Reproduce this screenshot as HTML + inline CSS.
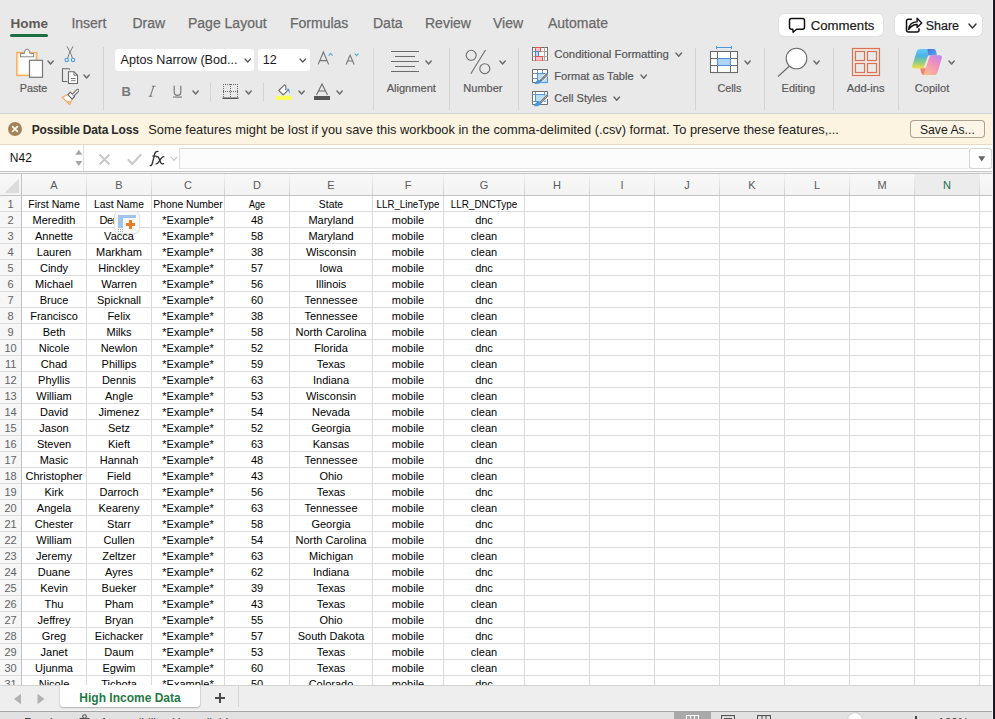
<!DOCTYPE html>
<html><head><meta charset="utf-8"><style>
html,body{margin:0;padding:0;}
body{width:995px;height:719px;overflow:hidden;position:relative;background:#e9e9e9;font-family:"Liberation Sans",sans-serif;}
.t{position:absolute;white-space:nowrap;}
.r{position:absolute;}
</style></head><body>
<div class="r" style="left:0px;top:0px;width:995px;height:113px;background:#e9e9e9;"></div>
<div class="t" style="left:10.50px;top:16.67px;font-size:13.5px;line-height:13.5px;color:#5a5a5a;font-weight:bold;">Home</div>
<div class="r" style="left:10px;top:34px;width:38px;height:3px;background:#1d7044;border-radius:2px;"></div>
<div class="t" style="left:71.40px;top:16.25px;font-size:14px;line-height:14px;color:#6a6a6a;-webkit-text-stroke:0.25px #6a6a6a;">Insert</div>
<div class="t" style="left:132.50px;top:16.25px;font-size:14px;line-height:14px;color:#6a6a6a;-webkit-text-stroke:0.25px #6a6a6a;">Draw</div>
<div class="t" style="left:188.00px;top:16.25px;font-size:14px;line-height:14px;color:#6a6a6a;-webkit-text-stroke:0.25px #6a6a6a;">Page Layout</div>
<div class="t" style="left:290.00px;top:16.25px;font-size:14px;line-height:14px;color:#6a6a6a;-webkit-text-stroke:0.25px #6a6a6a;">Formulas</div>
<div class="t" style="left:373.00px;top:16.25px;font-size:14px;line-height:14px;color:#6a6a6a;-webkit-text-stroke:0.25px #6a6a6a;">Data</div>
<div class="t" style="left:425.00px;top:16.25px;font-size:14px;line-height:14px;color:#6a6a6a;-webkit-text-stroke:0.25px #6a6a6a;">Review</div>
<div class="t" style="left:493.00px;top:16.25px;font-size:14px;line-height:14px;color:#6a6a6a;-webkit-text-stroke:0.25px #6a6a6a;">View</div>
<div class="t" style="left:548.00px;top:16.25px;font-size:14px;line-height:14px;color:#6a6a6a;-webkit-text-stroke:0.25px #6a6a6a;">Automate</div>
<div class="r" style="left:779px;top:14px;width:104px;height:22px;background:#fff;border-radius:5px;box-shadow:0 0 0 0.5px #d6d6d6;"></div>
<svg class="r" style="left:788px;top:17px" width="19" height="17" viewBox="0 0 19 17"><path d="M3.5 1.5 H14.5 Q16.5 1.5 16.5 3.5 V10.2 Q16.5 12.2 14.5 12.2 H8.6 L5.1 15.2 L4.8 12.2 H3.5 Q1.5 12.2 1.5 10.2 V3.5 Q1.5 1.5 3.5 1.5Z" fill="none" stroke="#111" stroke-width="1.5" stroke-linejoin="round"/></svg>
<div class="t" style="left:810.70px;top:19.13px;font-size:13.2px;line-height:13.2px;color:#1a1a1a;-webkit-text-stroke:0.2px #1a1a1a;">Comments</div>
<div class="r" style="left:895px;top:14px;width:87px;height:22px;background:#fff;border-radius:5px;box-shadow:0 0 0 0.5px #d6d6d6;"></div>
<svg class="r" style="left:904px;top:15px" width="19" height="18" viewBox="0 0 19 18"><path d="M7.5 4.2 h-3 a2 2 0 0 0 -2 2 v8.8 a2 2 0 0 0 2 2 h8.5 a2 2 0 0 0 2 -2 v-1.2" fill="none" stroke="#111" stroke-width="1.5" stroke-linecap="round"/><path d="M4.5 14.5 c0.6 -4.5 3.8 -7.6 8.6 -7.6 v-3.6 l4.6 4.6 l-4.6 4.6 v-3 c-3.4 0 -6.4 1.8 -8.6 5z" fill="none" stroke="#111" stroke-width="1.4" stroke-linejoin="round"/></svg>
<div class="t" style="left:925.70px;top:19.72px;font-size:12.5px;line-height:12.5px;color:#1a1a1a;-webkit-text-stroke:0.2px #1a1a1a;">Share</div>
<svg class="r" style="left:967.8px;top:22.6px" width="9" height="6" viewBox="0 0 9 6"><path d="M1 1 L4.5 5 L8 1" fill="none" stroke="#333" stroke-width="1.4" stroke-linecap="round" stroke-linejoin="round"/></svg>
<div class="r" style="left:103px;top:47px;width:1px;height:63px;background:#d3d3d3;"></div>
<div class="r" style="left:373px;top:48px;width:1px;height:62px;background:#d3d3d3;"></div>
<div class="r" style="left:449px;top:48px;width:1px;height:62px;background:#d3d3d3;"></div>
<div class="r" style="left:518px;top:48px;width:1px;height:62px;background:#d3d3d3;"></div>
<div class="r" style="left:695px;top:48px;width:1px;height:62px;background:#d3d3d3;"></div>
<div class="r" style="left:764px;top:48px;width:1px;height:62px;background:#d3d3d3;"></div>
<div class="r" style="left:833px;top:48px;width:1px;height:62px;background:#d3d3d3;"></div>
<div class="r" style="left:898px;top:48px;width:1px;height:62px;background:#d3d3d3;"></div>
<div class="r" style="left:210px;top:83px;width:1px;height:18px;background:#d3d3d3;"></div>
<div class="r" style="left:263px;top:83px;width:1px;height:18px;background:#d3d3d3;"></div>
<svg class="r" style="left:14px;top:46px" width="32" height="34" viewBox="0 0 32 34"><rect x="2.8" y="6.5" width="20" height="23" fill="#fbe9bd" stroke="#f5ac5f" stroke-width="1.3"/><rect x="4.6" y="8.3" width="16.4" height="19.4" fill="#fdfdfd"/><path d="M6.6 10.7 v-3.2 h3.6 q0.6 -4.2 2.9 -4.2 q2.3 0 2.9 4.2 h3.6 v3.2z" fill="#fff" stroke="#8a8a8a" stroke-width="1.1"/><rect x="15.5" y="14.3" width="13" height="17" fill="#fdfdfd" stroke="#777" stroke-width="1.2"/></svg>
<svg class="r" style="left:47.199999999999996px;top:59.8px" width="7.2" height="5" viewBox="0 0 7.2 5"><path d="M1 1 L3.6 4 L6.2 1" fill="none" stroke="#6b6b6b" stroke-width="1.5" stroke-linecap="round" stroke-linejoin="round"/></svg>
<div class="t" style="left:19.70px;top:82.76px;font-size:10.8px;line-height:10.8px;color:#5a5a5a;-webkit-text-stroke:0.2px #5a5a5a;">Paste</div>
<svg class="r" style="left:63px;top:45px" width="14" height="18" viewBox="0 0 14 18"><path d="M4 1.3 L8.2 9.5 M10 1.3 L5.8 9.5" stroke="#7a7a7a" stroke-width="1" fill="none"/><path d="M8.2 9.5 L9.3 13 M5.8 9.5 L4.7 13" stroke="#7a7a7a" stroke-width="1" fill="none"/><circle cx="3.7" cy="15" r="1.7" fill="none" stroke="#4c9be0" stroke-width="1.1"/><circle cx="10" cy="15" r="1.7" fill="none" stroke="#4c9be0" stroke-width="1.1"/></svg>
<svg class="r" style="left:61px;top:67px" width="18" height="18" viewBox="0 0 18 18"><path d="M6.5 14.5 h-5 v-12.8 h6.5 l1 1" fill="none" stroke="#6b6b6b" stroke-width="1.1"/><path d="M7.5 4.7 h5.5 l3.5 3.5 v8.3 h-9z" fill="#fff" stroke="#6b6b6b" stroke-width="1.1"/><path d="M13 4.7 v3.5 h3.5" fill="none" stroke="#6b6b6b" stroke-width="1"/><rect x="10" y="11" width="4.5" height="1" fill="#7a7a7a"/><rect x="10" y="13.2" width="4.5" height="1" fill="#7a7a7a"/></svg>
<svg class="r" style="left:83.4px;top:73.7px" width="7.2" height="5" viewBox="0 0 7.2 5"><path d="M1 1 L3.6 4 L6.2 1" fill="none" stroke="#6b6b6b" stroke-width="1.5" stroke-linecap="round" stroke-linejoin="round"/></svg>
<svg class="r" style="left:61px;top:88px" width="18" height="18" viewBox="0 0 18 18"><path d="M1.2 9.3 L7.3 6.2 L11.6 10.5 L8.6 16.6z" fill="#fff" stroke="#f2a65e" stroke-width="1.1" stroke-linejoin="round"/><path d="M4.5 12.3 L8.6 16.6 L10 13.6 z" fill="#f5b57a"/><path d="M6.8 6.7 L9.3 4.2 L13.6 8.5 L11.1 11z" fill="#fff" stroke="#6b6b6b" stroke-width="1.1" stroke-linejoin="round"/><path d="M11.2 6.3 L15.8 1.7 a1.2 1.2 0 0 1 1.7 1.7 L12.9 8" fill="#fff" stroke="#6b6b6b" stroke-width="1.1"/></svg>
<div class="r" style="left:115px;top:49px;width:139px;height:22px;background:#fff;border-radius:4px;"></div>
<div class="t" style="left:120.60px;top:53.93px;font-size:12.6px;line-height:12.6px;color:#1a1a1a;">Aptos Narrow (Bod...</div>
<svg class="r" style="left:243.65px;top:58.0px" width="7.5" height="5" viewBox="0 0 7.5 5"><path d="M1 1 L3.75 4 L6.5 1" fill="none" stroke="#555" stroke-width="1.2" stroke-linecap="round" stroke-linejoin="round"/></svg>
<div class="r" style="left:258px;top:49px;width:52px;height:22px;background:#fff;border-radius:4px;"></div>
<div class="t" style="left:262.80px;top:53.53px;font-size:12.6px;line-height:12.6px;color:#1a1a1a;">12</div>
<svg class="r" style="left:299.45px;top:58.0px" width="7.5" height="5" viewBox="0 0 7.5 5"><path d="M1 1 L3.75 4 L6.5 1" fill="none" stroke="#555" stroke-width="1.2" stroke-linecap="round" stroke-linejoin="round"/></svg>
<svg class="r" style="left:315px;top:50px" width="22" height="17" viewBox="0 0 22 17"><path d="M3.2 14.4 L8.4 2 L13.6 14.4 M4.9 10.6 H11.9" fill="none" stroke="#777" stroke-width="1.15"/><path d="M13.6 5.6 L15.6 3.4 L17.6 5.6" fill="none" stroke="#5aaee8" stroke-width="1.2"/></svg>
<svg class="r" style="left:343px;top:52px" width="20" height="15" viewBox="0 0 20 15"><path d="M3.1 12.4 L7.1 3.1 L11.1 12.4 M4.5 9 H9.7" fill="none" stroke="#777" stroke-width="1.15"/><path d="M11.7 1.6 L13.6 3.6 L15.5 1.6" fill="none" stroke="#5aaee8" stroke-width="1.2"/></svg>
<div class="t" style="left:121.60px;top:85.20px;font-size:13px;line-height:13px;color:#7a7a7a;font-weight:bold;">B</div>
<svg class="r" style="left:146px;top:84px" width="12" height="14" viewBox="0 0 12 14"><path d="M5.9 2.2 h3.6 M2.6 12.2 h3.6 M7.7 2.2 L4.4 12.2" stroke="#7a7a7a" stroke-width="1.1" fill="none"/></svg>
<svg class="r" style="left:171px;top:84px" width="13" height="15" viewBox="0 0 13 15"><path d="M3.2 1.8 V8 a3.3 3.3 0 0 0 6.6 0 V1.8" fill="none" stroke="#7a7a7a" stroke-width="1.2"/><rect x="2" y="12.5" width="9" height="1.1" fill="#7a7a7a"/></svg>
<svg class="r" style="left:192.20000000000002px;top:89.7px" width="7.2" height="5" viewBox="0 0 7.2 5"><path d="M1 1 L3.6 4 L6.2 1" fill="none" stroke="#6b6b6b" stroke-width="1.5" stroke-linecap="round" stroke-linejoin="round"/></svg>
<svg class="r" style="left:221px;top:83px" width="19" height="17" viewBox="0 0 19 17"><rect x="2" y="1" width="1" height="1" fill="#6b6b6b"/><rect x="2" y="8" width="1" height="1" fill="#6b6b6b"/><rect x="4" y="1" width="1" height="1" fill="#6b6b6b"/><rect x="4" y="8" width="1" height="1" fill="#6b6b6b"/><rect x="6" y="1" width="1" height="1" fill="#6b6b6b"/><rect x="6" y="8" width="1" height="1" fill="#6b6b6b"/><rect x="8" y="1" width="1" height="1" fill="#6b6b6b"/><rect x="8" y="8" width="1" height="1" fill="#6b6b6b"/><rect x="10" y="1" width="1" height="1" fill="#6b6b6b"/><rect x="10" y="8" width="1" height="1" fill="#6b6b6b"/><rect x="12" y="1" width="1" height="1" fill="#6b6b6b"/><rect x="12" y="8" width="1" height="1" fill="#6b6b6b"/><rect x="14" y="1" width="1" height="1" fill="#6b6b6b"/><rect x="14" y="8" width="1" height="1" fill="#6b6b6b"/><rect x="16" y="1" width="1" height="1" fill="#6b6b6b"/><rect x="16" y="8" width="1" height="1" fill="#6b6b6b"/><rect x="2" y="1" width="1" height="1" fill="#6b6b6b"/><rect x="16" y="1" width="1" height="1" fill="#6b6b6b"/><rect x="9" y="1" width="1" height="1" fill="#6b6b6b"/><rect x="2" y="3" width="1" height="1" fill="#6b6b6b"/><rect x="16" y="3" width="1" height="1" fill="#6b6b6b"/><rect x="9" y="3" width="1" height="1" fill="#6b6b6b"/><rect x="2" y="5" width="1" height="1" fill="#6b6b6b"/><rect x="16" y="5" width="1" height="1" fill="#6b6b6b"/><rect x="9" y="5" width="1" height="1" fill="#6b6b6b"/><rect x="2" y="7" width="1" height="1" fill="#6b6b6b"/><rect x="16" y="7" width="1" height="1" fill="#6b6b6b"/><rect x="9" y="7" width="1" height="1" fill="#6b6b6b"/><rect x="2" y="9" width="1" height="1" fill="#6b6b6b"/><rect x="16" y="9" width="1" height="1" fill="#6b6b6b"/><rect x="9" y="9" width="1" height="1" fill="#6b6b6b"/><rect x="2" y="11" width="1" height="1" fill="#6b6b6b"/><rect x="16" y="11" width="1" height="1" fill="#6b6b6b"/><rect x="9" y="11" width="1" height="1" fill="#6b6b6b"/><rect x="2" y="13" width="1" height="1" fill="#6b6b6b"/><rect x="16" y="13" width="1" height="1" fill="#6b6b6b"/><rect x="9" y="13" width="1" height="1" fill="#6b6b6b"/><rect x="1.5" y="14.5" width="16" height="1.5" fill="#555"/></svg>
<svg class="r" style="left:245.4px;top:89.7px" width="7.2" height="5" viewBox="0 0 7.2 5"><path d="M1 1 L3.6 4 L6.2 1" fill="none" stroke="#6b6b6b" stroke-width="1.5" stroke-linecap="round" stroke-linejoin="round"/></svg>
<svg class="r" style="left:275px;top:82px" width="19" height="19" viewBox="0 0 19 19"><path d="M13 8.2 L8.2 12.8 L3.8 8.5 L9 3.3 L10.6 3.6 L10.8 7.8z" fill="#fff"/><path d="M13 8.2 L8.2 12.8 L3.8 8.5 L8.7 3.6 Q9.9 2.2 10.7 3.8 L10.8 7.8" fill="none" stroke="#6b6b6b" stroke-width="1.15" stroke-linejoin="round" stroke-linecap="round"/><path d="M12.5 6.2 Q15.2 6.6 14.6 11.8 Q13.8 9.2 12.3 8.3z" fill="#4a96dc"/><rect x="1" y="13.8" width="16" height="4.2" fill="#fcfb5c"/></svg>
<svg class="r" style="left:298.4px;top:89.7px" width="7.2" height="5" viewBox="0 0 7.2 5"><path d="M1 1 L3.6 4 L6.2 1" fill="none" stroke="#6b6b6b" stroke-width="1.5" stroke-linecap="round" stroke-linejoin="round"/></svg>
<svg class="r" style="left:313px;top:82px" width="18" height="19" viewBox="0 0 18 19"><path d="M3.5 13 L9 2 L14.5 13 M5.5 9 h7" fill="none" stroke="#6b6b6b" stroke-width="1.1"/><rect x="1" y="14" width="16" height="4" fill="#545454"/></svg>
<svg class="r" style="left:336.4px;top:89.7px" width="7.2" height="5" viewBox="0 0 7.2 5"><path d="M1 1 L3.6 4 L6.2 1" fill="none" stroke="#6b6b6b" stroke-width="1.5" stroke-linecap="round" stroke-linejoin="round"/></svg>
<div class="r" style="left:391px;top:51px;width:28px;height:1px;background:#6b6b6b;"></div>
<div class="r" style="left:395px;top:56px;width:20px;height:1px;background:#6b6b6b;"></div>
<div class="r" style="left:391px;top:61px;width:28px;height:1px;background:#6b6b6b;"></div>
<div class="r" style="left:395px;top:66px;width:20px;height:1px;background:#6b6b6b;"></div>
<div class="r" style="left:391px;top:71px;width:28px;height:1px;background:#6b6b6b;"></div>
<svg class="r" style="left:425.2px;top:59.7px" width="7.2" height="5" viewBox="0 0 7.2 5"><path d="M1 1 L3.6 4 L6.2 1" fill="none" stroke="#6b6b6b" stroke-width="1.5" stroke-linecap="round" stroke-linejoin="round"/></svg>
<div class="t" style="left:311.30px;width:200px;text-align:center;top:82.60px;font-size:11.1px;line-height:11.1px;color:#5a5a5a;-webkit-text-stroke:0.2px #5a5a5a;">Alignment</div>
<svg class="r" style="left:463px;top:48px" width="30" height="28" viewBox="0 0 30 28"><ellipse cx="8.2" cy="7.3" rx="5" ry="5" fill="none" stroke="#6b6b6b" stroke-width="1.1"/><ellipse cx="21.8" cy="20.7" rx="5" ry="5" fill="none" stroke="#6b6b6b" stroke-width="1.1"/><path d="M22.5 2 L7.8 25.7" stroke="#6b6b6b" stroke-width="1.1"/></svg>
<svg class="r" style="left:498.59999999999997px;top:59.7px" width="7.2" height="5" viewBox="0 0 7.2 5"><path d="M1 1 L3.6 4 L6.2 1" fill="none" stroke="#6b6b6b" stroke-width="1.5" stroke-linecap="round" stroke-linejoin="round"/></svg>
<div class="t" style="left:382.90px;width:200px;text-align:center;top:82.69px;font-size:11px;line-height:11px;color:#5a5a5a;-webkit-text-stroke:0.2px #5a5a5a;">Number</div>
<svg class="r" style="left:531px;top:46px" width="17" height="15" viewBox="0 0 17 15"><rect x="1.5" y="1.5" width="15" height="13.5" fill="#fff" stroke="#6d6d6d" stroke-width="1"/><path d="M13.5 1.5 V15 M1.5 5.5 H16.5 M1.5 10.5 H16.5" stroke="#a8a8a8" stroke-width="1"/><rect x="4.5" y="1.5" width="5" height="4" fill="#ffc2c9" stroke="#e5554c" stroke-width="1"/><rect x="4.5" y="5.5" width="3" height="5" fill="#b3dcfb" stroke="#3e8ed8" stroke-width="1"/><rect x="4.5" y="10.5" width="7" height="4.5" fill="#ffc2c9" stroke="#e5554c" stroke-width="1"/></svg>
<svg class="r" style="left:531px;top:68px" width="18" height="17" viewBox="0 0 18 17"><rect x="1.5" y="1.5" width="15" height="13" fill="#fff"/><path d="M16.5 5.5 V1.5 H1.5 V14.5 H4.5" fill="none" stroke="#6d6d6d" stroke-width="1"/><path d="M6.5 1.5 V5.5 M11.5 1.5 V5.5 M1.5 5.5 H6.5 M1.5 10.5 H6.5" stroke="#8f8f8f" stroke-width="1"/><rect x="6.5" y="5.5" width="10" height="9" fill="#bddcf6" stroke="#4a96dc" stroke-width="1"/><path d="M16.3 6.2 L9.3 13.2" stroke="#fff" stroke-width="3.6"/><path d="M16.3 6.2 L9.3 13.2" stroke="#747474" stroke-width="2.4"/><path d="M15.6 6.9 L10 12.5" stroke="#e8e8e8" stroke-width="0.8" stroke-dasharray="1 1"/><path d="M3.5 16 Q4.5 12.5 8.3 11.8 L10.4 13.8 Q9.4 16.3 3.5 16z" fill="#4a96dc"/></svg>
<svg class="r" style="left:531px;top:90px" width="18" height="17" viewBox="0 0 18 17"><rect x="1.5" y="1.5" width="15" height="13" fill="#fff"/><path d="M16.5 5 V1.5 H1.5 V14.5 H4.5 M16.5 9 V14.5 H9" fill="none" stroke="#6d6d6d" stroke-width="1"/><path d="M4.5 1.5 V4.5 M13.5 1.5 V4.5 M1.5 4.5 H4.5 M1.5 11.5 H4.5" stroke="#8f8f8f" stroke-width="1"/><rect x="4.5" y="4.5" width="9.5" height="7" fill="#bddcf6" stroke="#4a96dc" stroke-width="1"/><path d="M16.8 5.2 L9.3 12.7" stroke="#fff" stroke-width="3.6"/><path d="M16.8 5.2 L9.3 12.7" stroke="#747474" stroke-width="2.4"/><path d="M16.1 5.9 L10 12" stroke="#e8e8e8" stroke-width="0.8" stroke-dasharray="1 1"/><path d="M3 16.3 Q4 12.3 8 11.5 L10.3 13.5 Q9.3 16.5 3 16.3z" fill="#4a96dc"/></svg>
<div class="t" style="left:554.30px;top:48.65px;font-size:11.4px;line-height:11.4px;color:#555;-webkit-text-stroke:0.2px #555;">Conditional Formatting</div>
<svg class="r" style="left:675.05px;top:51.6px" width="7.5" height="5.2" viewBox="0 0 7.5 5.2"><path d="M1 1 L3.75 4.2 L6.5 1" fill="none" stroke="#6b6b6b" stroke-width="1.5" stroke-linecap="round" stroke-linejoin="round"/></svg>
<div class="t" style="left:554.30px;top:70.90px;font-size:11.1px;line-height:11.1px;color:#555;-webkit-text-stroke:0.2px #555;">Format as Table</div>
<svg class="r" style="left:639.95px;top:73.60000000000001px" width="7.5" height="5.2" viewBox="0 0 7.5 5.2"><path d="M1 1 L3.75 4.2 L6.5 1" fill="none" stroke="#6b6b6b" stroke-width="1.5" stroke-linecap="round" stroke-linejoin="round"/></svg>
<div class="t" style="left:554.30px;top:92.90px;font-size:11.1px;line-height:11.1px;color:#555;-webkit-text-stroke:0.2px #555;">Cell Styles</div>
<svg class="r" style="left:613.25px;top:95.60000000000001px" width="7.5" height="5.2" viewBox="0 0 7.5 5.2"><path d="M1 1 L3.75 4.2 L6.5 1" fill="none" stroke="#6b6b6b" stroke-width="1.5" stroke-linecap="round" stroke-linejoin="round"/></svg>
<svg class="r" style="left:708px;top:45px" width="32" height="30" viewBox="0 0 32 30"><path d="M8.5 2.5 H23.5 M8.5 1 V4 M23.5 1 V4" stroke="#4a96dc" stroke-width="1"/><rect x="2.5" y="6.5" width="27" height="21" fill="#fff" stroke="#6b6b6b" stroke-width="1.1"/><path d="M9.5 6.5 V27.5 M22.5 6.5 V27.5 M2.5 13.5 H29.5 M2.5 20.5 H29.5" stroke="#6b6b6b" stroke-width="1"/><rect x="9.5" y="13.5" width="13" height="7" fill="#b3d4f5" stroke="#4a96dc" stroke-width="1.1"/></svg>
<svg class="r" style="left:744.4px;top:59.7px" width="7.2" height="5" viewBox="0 0 7.2 5"><path d="M1 1 L3.6 4 L6.2 1" fill="none" stroke="#6b6b6b" stroke-width="1.5" stroke-linecap="round" stroke-linejoin="round"/></svg>
<div class="t" style="left:629.40px;width:200px;text-align:center;top:82.86px;font-size:10.8px;line-height:10.8px;color:#5a5a5a;-webkit-text-stroke:0.2px #5a5a5a;">Cells</div>
<svg class="r" style="left:776px;top:46px" width="34" height="32" viewBox="0 0 34 32"><circle cx="20.5" cy="12.5" r="10.3" fill="#fff" stroke="#6b6b6b" stroke-width="1.1"/><path d="M13.5 20 L2 30.5" stroke="#6b6b6b" stroke-width="1.1"/></svg>
<svg class="r" style="left:813.4px;top:59.7px" width="7.2" height="5" viewBox="0 0 7.2 5"><path d="M1 1 L3.6 4 L6.2 1" fill="none" stroke="#6b6b6b" stroke-width="1.5" stroke-linecap="round" stroke-linejoin="round"/></svg>
<div class="t" style="left:698.40px;width:200px;text-align:center;top:82.69px;font-size:11px;line-height:11px;color:#5a5a5a;-webkit-text-stroke:0.2px #5a5a5a;">Editing</div>
<svg class="r" style="left:850px;top:46px" width="32" height="32" viewBox="0 0 32 32"><rect x="2.5" y="2.5" width="27" height="27" fill="none" stroke="#e2704a" stroke-width="1.15"/><rect x="5.5" y="5.5" width="9" height="9" fill="none" stroke="#e2704a" stroke-width="1.15"/><rect x="17.5" y="5.5" width="9" height="9" fill="none" stroke="#e2704a" stroke-width="1.15"/><rect x="5.5" y="17.5" width="9" height="9" fill="none" stroke="#e2704a" stroke-width="1.15"/><rect x="17.5" y="17.5" width="9" height="9" fill="none" stroke="#e2704a" stroke-width="1.15"/></svg>
<div class="t" style="left:765.70px;width:200px;text-align:center;top:82.52px;font-size:11.2px;line-height:11.2px;color:#5a5a5a;-webkit-text-stroke:0.2px #5a5a5a;">Add-ins</div>
<svg class="r" style="left:908px;top:45px" width="40" height="33" viewBox="0 0 40 33"><defs><linearGradient id="cg1" x1="0" y1="0" x2="0" y2="1"><stop offset="0" stop-color="#62ccfb"/><stop offset="0.35" stop-color="#4fb1e6"/><stop offset="0.65" stop-color="#86cc88"/><stop offset="1" stop-color="#f9da46"/></linearGradient><linearGradient id="cg2" x1="1" y1="0" x2="0.2" y2="1"><stop offset="0" stop-color="#bd86f3"/><stop offset="0.45" stop-color="#f190bb"/><stop offset="1" stop-color="#fbc286"/></linearGradient><linearGradient id="cg3" x1="0" y1="0" x2="1" y2="1"><stop offset="0" stop-color="#4a72dc"/><stop offset="1" stop-color="#5aa6ee"/></linearGradient></defs><path d="M10 4.6 Q11 3.9 13 3.9 L25 3.9 Q27.6 3.9 28.2 7 L28.6 10.2 L20.2 10.2 L15.4 23.4 L6.5 23.4 Q3.8 23.4 4.3 20.6 L8.4 7.2 Q9 5.3 10 4.6 Z" fill="url(#cg1)"/><path d="M19.5 3.9 L25 3.9 Q27.6 3.9 28.2 7 L28.6 10.2 L20.2 10.2 Z" fill="url(#cg3)"/><path d="M22.6 10.2 L31.6 10.2 Q34.3 10.2 33.8 13 L29.6 27.2 Q28.9 30 26 30 L16.5 30 Q13.8 30 13.2 27.5 L12.3 23.4 L15.6 23.4 Q17.5 23.4 18.3 21.5 L21.4 12 Q21.9 10.2 22.6 10.2 Z" fill="url(#cg2)"/><path d="M12.3 23.4 L17.6 23.4 L15.6 30 L16.5 30 Q13.8 30 13.2 27.5 Z" fill="#f0846a"/></svg>
<svg class="r" style="left:947.6px;top:59.7px" width="7.2" height="5" viewBox="0 0 7.2 5"><path d="M1 1 L3.6 4 L6.2 1" fill="none" stroke="#6b6b6b" stroke-width="1.5" stroke-linecap="round" stroke-linejoin="round"/></svg>
<div class="t" style="left:832.00px;width:200px;text-align:center;top:82.60px;font-size:11.1px;line-height:11.1px;color:#5a5a5a;-webkit-text-stroke:0.2px #5a5a5a;">Copilot</div>
<div class="r" style="left:0px;top:113px;width:993px;height:1px;background:#d4d4d4;"></div>
<div class="r" style="left:0px;top:114px;width:993px;height:30px;background:#fcf4e1;"></div>
<div class="r" style="left:0px;top:144px;width:993px;height:1px;background:#e6dbc1;"></div>
<svg class="r" style="left:7px;top:121px" width="17" height="17" viewBox="0 0 17 17"><circle cx="8" cy="8" r="7" fill="#a3845a"/><path d="M5.6 5.6 L10.4 10.4 M10.4 5.6 L5.6 10.4" stroke="#fdf8ec" stroke-width="1.7" stroke-linecap="round"/></svg>
<div class="t" style="left:31.70px;top:124.14px;font-size:12px;line-height:12px;color:#2a2a2a;font-weight:bold;letter-spacing:-0.17px;">Possible Data Loss</div>
<div class="t" style="left:148.30px;top:124.43px;font-size:12.84px;line-height:12.84px;color:#222;">Some features might be lost if you save this workbook in the comma-delimited (.csv) format. To preserve these features,...</div>
<div class="r" style="left:910px;top:120px;width:75px;height:18px;background:#fdf6e6;border-radius:4px;box-shadow:inset 0 0 0 1px #aaa190;"></div>
<div class="t" style="left:919.90px;top:123.67px;font-size:12.2px;line-height:12.2px;color:#1a1a1a;">Save As...</div>
<div class="r" style="left:0px;top:145px;width:993px;height:26px;background:#fff;"></div>
<div class="t" style="left:9.80px;top:152.44px;font-size:12px;line-height:12px;color:#111;">N42</div>
<svg class="r" style="left:74px;top:149px" width="10" height="19" viewBox="0 0 10 19"><path d="M1.3 5.8 L4.8 0.8 L8.3 5.8z" fill="#a6a6a6"/><path d="M1.3 12 L4.8 17 L8.3 12z" fill="#a6a6a6"/></svg>
<div class="r" style="left:83px;top:145px;width:1px;height:26px;background:#dedede;"></div>
<svg class="r" style="left:97px;top:152px" width="15" height="15" viewBox="0 0 15 15"><path d="M2.5 2.5 L12.5 12.5 M12.5 2.5 L2.5 12.5" stroke="#c8c8c8" stroke-width="1.9"/></svg>
<svg class="r" style="left:126px;top:152px" width="17" height="15" viewBox="0 0 17 15"><path d="M1.8 7.2 L6.3 12 L15.2 2.3" fill="none" stroke="#c8c8c8" stroke-width="2"/></svg>
<svg class="r" style="left:149px;top:150px" width="17" height="17" viewBox="0 0 17 17"><path d="M1.2 15.6 Q2.8 15.8 3.6 12.5 L5.6 4.2 Q6.4 1.2 9 1.4" fill="none" stroke="#333" stroke-width="1.35" stroke-linecap="round"/><path d="M3.3 6.1 H7.6" stroke="#333" stroke-width="1.2"/><path d="M7.6 6.8 Q9.2 6.2 10 8.4 L11.6 12.6 Q12.4 14.4 14.6 13.6" fill="none" stroke="#333" stroke-width="1.35" stroke-linecap="round"/><path d="M14.8 6.6 Q13.6 6.4 12.2 8.4 L9.4 12.4 Q8.4 14 7.2 13.8" fill="none" stroke="#333" stroke-width="1.35" stroke-linecap="round"/></svg>
<svg class="r" style="left:169.7px;top:156.25px" width="8" height="5.5" viewBox="0 0 8 5.5"><path d="M1 1 L4.0 4.5 L7 1" fill="none" stroke="#c0c0c0" stroke-width="1.1" stroke-linecap="round" stroke-linejoin="round"/></svg>
<div class="r" style="left:179px;top:148px;width:790px;height:21px;background:#fcfcfc;box-shadow:inset 1px 1px 0 #dadada, inset 0 -1px 0 #e6e6e6;"></div>
<div class="r" style="left:969px;top:148px;width:23px;height:21px;background:#fff;border-radius:3px;box-shadow:inset 0 0 0 1px #d6d6d6, inset 0 -1px 0 #cfcfcf;"></div>
<svg class="r" style="left:977px;top:155px" width="10" height="8" viewBox="0 0 10 8"><path d="M1.2 1.2 L8.3 1.2 L4.75 6.5z" fill="#666"/></svg>
<div class="r" style="left:0px;top:171px;width:993px;height:1px;background:#c6c6c6;"></div>
<div class="r" style="left:0px;top:172px;width:993px;height:1px;background:#f4f4f4;"></div>
<div class="r" style="left:0px;top:173px;width:993px;height:1px;background:#c6c6c6;"></div>
<div class="r" style="left:0px;top:174px;width:993px;height:21px;background:linear-gradient(#f8f8f8,#f3f3f3);"></div>
<div class="r" style="left:915px;top:174px;width:64px;height:21px;background:#ececec;"></div>
<div class="r" style="left:0px;top:196px;width:21px;height:489px;background:#f6f6f6;"></div>
<div class="r" style="left:22px;top:196px;width:971px;height:489px;background:#fff;"></div>
<svg class="r" style="left:3px;top:177px" width="18" height="17" viewBox="0 0 18 17"><path d="M16 1.5 L16 16 L1.5 16z" fill="#dcdcdc"/></svg>
<div class="r" style="left:0px;top:195px;width:993px;height:1px;background:#c3c3c3;"></div>
<div class="r" style="left:21px;top:174px;width:1px;height:511px;background:#c3c3c3;"></div>
<div class="r" style="left:86px;top:174px;width:1px;height:21px;background:linear-gradient(#f3f3f3,#d0d0d0);"></div>
<div class="r" style="left:86px;top:196px;width:1px;height:489px;background:#dadada;"></div>
<div class="r" style="left:151px;top:174px;width:1px;height:21px;background:linear-gradient(#f3f3f3,#d0d0d0);"></div>
<div class="r" style="left:151px;top:196px;width:1px;height:489px;background:#dadada;"></div>
<div class="r" style="left:224px;top:174px;width:1px;height:21px;background:linear-gradient(#f3f3f3,#d0d0d0);"></div>
<div class="r" style="left:224px;top:196px;width:1px;height:489px;background:#dadada;"></div>
<div class="r" style="left:289px;top:174px;width:1px;height:21px;background:linear-gradient(#f3f3f3,#d0d0d0);"></div>
<div class="r" style="left:289px;top:196px;width:1px;height:489px;background:#dadada;"></div>
<div class="r" style="left:372px;top:174px;width:1px;height:21px;background:linear-gradient(#f3f3f3,#d0d0d0);"></div>
<div class="r" style="left:372px;top:196px;width:1px;height:489px;background:#dadada;"></div>
<div class="r" style="left:443px;top:174px;width:1px;height:21px;background:linear-gradient(#f3f3f3,#d0d0d0);"></div>
<div class="r" style="left:443px;top:196px;width:1px;height:489px;background:#dadada;"></div>
<div class="r" style="left:524px;top:174px;width:1px;height:21px;background:linear-gradient(#f3f3f3,#d0d0d0);"></div>
<div class="r" style="left:524px;top:196px;width:1px;height:489px;background:#dadada;"></div>
<div class="r" style="left:589px;top:174px;width:1px;height:21px;background:linear-gradient(#f3f3f3,#d0d0d0);"></div>
<div class="r" style="left:589px;top:196px;width:1px;height:489px;background:#dadada;"></div>
<div class="r" style="left:654px;top:174px;width:1px;height:21px;background:linear-gradient(#f3f3f3,#d0d0d0);"></div>
<div class="r" style="left:654px;top:196px;width:1px;height:489px;background:#dadada;"></div>
<div class="r" style="left:719px;top:174px;width:1px;height:21px;background:linear-gradient(#f3f3f3,#d0d0d0);"></div>
<div class="r" style="left:719px;top:196px;width:1px;height:489px;background:#dadada;"></div>
<div class="r" style="left:784px;top:174px;width:1px;height:21px;background:linear-gradient(#f3f3f3,#d0d0d0);"></div>
<div class="r" style="left:784px;top:196px;width:1px;height:489px;background:#dadada;"></div>
<div class="r" style="left:849px;top:174px;width:1px;height:21px;background:linear-gradient(#f3f3f3,#d0d0d0);"></div>
<div class="r" style="left:849px;top:196px;width:1px;height:489px;background:#dadada;"></div>
<div class="r" style="left:914px;top:174px;width:1px;height:21px;background:linear-gradient(#f3f3f3,#d0d0d0);"></div>
<div class="r" style="left:914px;top:196px;width:1px;height:489px;background:#dadada;"></div>
<div class="r" style="left:979px;top:174px;width:1px;height:21px;background:linear-gradient(#f3f3f3,#d0d0d0);"></div>
<div class="r" style="left:979px;top:196px;width:1px;height:489px;background:#dadada;"></div>
<div class="r" style="left:0px;top:211px;width:21px;height:1px;background:#dcdcdc;"></div>
<div class="r" style="left:22px;top:211px;width:971px;height:1px;background:#dadada;"></div>
<div class="r" style="left:0px;top:227px;width:21px;height:1px;background:#dcdcdc;"></div>
<div class="r" style="left:22px;top:227px;width:971px;height:1px;background:#dadada;"></div>
<div class="r" style="left:0px;top:243px;width:21px;height:1px;background:#dcdcdc;"></div>
<div class="r" style="left:22px;top:243px;width:971px;height:1px;background:#dadada;"></div>
<div class="r" style="left:0px;top:259px;width:21px;height:1px;background:#dcdcdc;"></div>
<div class="r" style="left:22px;top:259px;width:971px;height:1px;background:#dadada;"></div>
<div class="r" style="left:0px;top:275px;width:21px;height:1px;background:#dcdcdc;"></div>
<div class="r" style="left:22px;top:275px;width:971px;height:1px;background:#dadada;"></div>
<div class="r" style="left:0px;top:291px;width:21px;height:1px;background:#dcdcdc;"></div>
<div class="r" style="left:22px;top:291px;width:971px;height:1px;background:#dadada;"></div>
<div class="r" style="left:0px;top:307px;width:21px;height:1px;background:#dcdcdc;"></div>
<div class="r" style="left:22px;top:307px;width:971px;height:1px;background:#dadada;"></div>
<div class="r" style="left:0px;top:323px;width:21px;height:1px;background:#dcdcdc;"></div>
<div class="r" style="left:22px;top:323px;width:971px;height:1px;background:#dadada;"></div>
<div class="r" style="left:0px;top:339px;width:21px;height:1px;background:#dcdcdc;"></div>
<div class="r" style="left:22px;top:339px;width:971px;height:1px;background:#dadada;"></div>
<div class="r" style="left:0px;top:355px;width:21px;height:1px;background:#dcdcdc;"></div>
<div class="r" style="left:22px;top:355px;width:971px;height:1px;background:#dadada;"></div>
<div class="r" style="left:0px;top:371px;width:21px;height:1px;background:#dcdcdc;"></div>
<div class="r" style="left:22px;top:371px;width:971px;height:1px;background:#dadada;"></div>
<div class="r" style="left:0px;top:387px;width:21px;height:1px;background:#dcdcdc;"></div>
<div class="r" style="left:22px;top:387px;width:971px;height:1px;background:#dadada;"></div>
<div class="r" style="left:0px;top:403px;width:21px;height:1px;background:#dcdcdc;"></div>
<div class="r" style="left:22px;top:403px;width:971px;height:1px;background:#dadada;"></div>
<div class="r" style="left:0px;top:419px;width:21px;height:1px;background:#dcdcdc;"></div>
<div class="r" style="left:22px;top:419px;width:971px;height:1px;background:#dadada;"></div>
<div class="r" style="left:0px;top:435px;width:21px;height:1px;background:#dcdcdc;"></div>
<div class="r" style="left:22px;top:435px;width:971px;height:1px;background:#dadada;"></div>
<div class="r" style="left:0px;top:451px;width:21px;height:1px;background:#dcdcdc;"></div>
<div class="r" style="left:22px;top:451px;width:971px;height:1px;background:#dadada;"></div>
<div class="r" style="left:0px;top:467px;width:21px;height:1px;background:#dcdcdc;"></div>
<div class="r" style="left:22px;top:467px;width:971px;height:1px;background:#dadada;"></div>
<div class="r" style="left:0px;top:483px;width:21px;height:1px;background:#dcdcdc;"></div>
<div class="r" style="left:22px;top:483px;width:971px;height:1px;background:#dadada;"></div>
<div class="r" style="left:0px;top:499px;width:21px;height:1px;background:#dcdcdc;"></div>
<div class="r" style="left:22px;top:499px;width:971px;height:1px;background:#dadada;"></div>
<div class="r" style="left:0px;top:515px;width:21px;height:1px;background:#dcdcdc;"></div>
<div class="r" style="left:22px;top:515px;width:971px;height:1px;background:#dadada;"></div>
<div class="r" style="left:0px;top:531px;width:21px;height:1px;background:#dcdcdc;"></div>
<div class="r" style="left:22px;top:531px;width:971px;height:1px;background:#dadada;"></div>
<div class="r" style="left:0px;top:547px;width:21px;height:1px;background:#dcdcdc;"></div>
<div class="r" style="left:22px;top:547px;width:971px;height:1px;background:#dadada;"></div>
<div class="r" style="left:0px;top:563px;width:21px;height:1px;background:#dcdcdc;"></div>
<div class="r" style="left:22px;top:563px;width:971px;height:1px;background:#dadada;"></div>
<div class="r" style="left:0px;top:579px;width:21px;height:1px;background:#dcdcdc;"></div>
<div class="r" style="left:22px;top:579px;width:971px;height:1px;background:#dadada;"></div>
<div class="r" style="left:0px;top:595px;width:21px;height:1px;background:#dcdcdc;"></div>
<div class="r" style="left:22px;top:595px;width:971px;height:1px;background:#dadada;"></div>
<div class="r" style="left:0px;top:611px;width:21px;height:1px;background:#dcdcdc;"></div>
<div class="r" style="left:22px;top:611px;width:971px;height:1px;background:#dadada;"></div>
<div class="r" style="left:0px;top:627px;width:21px;height:1px;background:#dcdcdc;"></div>
<div class="r" style="left:22px;top:627px;width:971px;height:1px;background:#dadada;"></div>
<div class="r" style="left:0px;top:643px;width:21px;height:1px;background:#dcdcdc;"></div>
<div class="r" style="left:22px;top:643px;width:971px;height:1px;background:#dadada;"></div>
<div class="r" style="left:0px;top:659px;width:21px;height:1px;background:#dcdcdc;"></div>
<div class="r" style="left:22px;top:659px;width:971px;height:1px;background:#dadada;"></div>
<div class="r" style="left:0px;top:675px;width:21px;height:1px;background:#dcdcdc;"></div>
<div class="r" style="left:22px;top:675px;width:971px;height:1px;background:#dadada;"></div>
<div class="t" style="left:34.00px;width:40px;text-align:center;top:179.59px;font-size:11px;line-height:11px;color:#5a5a5a;">A</div>
<div class="t" style="left:99.00px;width:40px;text-align:center;top:179.59px;font-size:11px;line-height:11px;color:#5a5a5a;">B</div>
<div class="t" style="left:168.00px;width:40px;text-align:center;top:179.59px;font-size:11px;line-height:11px;color:#5a5a5a;">C</div>
<div class="t" style="left:237.00px;width:40px;text-align:center;top:179.59px;font-size:11px;line-height:11px;color:#5a5a5a;">D</div>
<div class="t" style="left:311.00px;width:40px;text-align:center;top:179.59px;font-size:11px;line-height:11px;color:#5a5a5a;">E</div>
<div class="t" style="left:388.00px;width:40px;text-align:center;top:179.59px;font-size:11px;line-height:11px;color:#5a5a5a;">F</div>
<div class="t" style="left:464.00px;width:40px;text-align:center;top:179.59px;font-size:11px;line-height:11px;color:#5a5a5a;">G</div>
<div class="t" style="left:537.00px;width:40px;text-align:center;top:179.59px;font-size:11px;line-height:11px;color:#5a5a5a;">H</div>
<div class="t" style="left:602.00px;width:40px;text-align:center;top:179.59px;font-size:11px;line-height:11px;color:#5a5a5a;">I</div>
<div class="t" style="left:667.00px;width:40px;text-align:center;top:179.59px;font-size:11px;line-height:11px;color:#5a5a5a;">J</div>
<div class="t" style="left:732.00px;width:40px;text-align:center;top:179.59px;font-size:11px;line-height:11px;color:#5a5a5a;">K</div>
<div class="t" style="left:797.00px;width:40px;text-align:center;top:179.59px;font-size:11px;line-height:11px;color:#5a5a5a;">L</div>
<div class="t" style="left:862.00px;width:40px;text-align:center;top:179.59px;font-size:11px;line-height:11px;color:#5a5a5a;">M</div>
<div class="t" style="left:927.00px;width:40px;text-align:center;top:179.59px;font-size:11px;line-height:11px;color:#1d7044;">N</div>
<div class="t" style="left:-4.40px;width:30px;text-align:center;top:199.49px;font-size:11px;line-height:11px;color:#636363;">1</div>
<div class="t" style="left:4.00px;width:100px;text-align:center;top:199.49px;font-size:11px;line-height:11px;color:#000;transform:scaleX(0.957);">First Name</div>
<div class="t" style="left:69.00px;width:100px;text-align:center;top:199.49px;font-size:11px;line-height:11px;color:#000;transform:scaleX(0.936);">Last Name</div>
<div class="t" style="left:138.00px;width:100px;text-align:center;top:199.49px;font-size:11px;line-height:11px;color:#000;transform:scaleX(0.939);">Phone Number</div>
<div class="t" style="left:207.00px;width:100px;text-align:center;top:199.49px;font-size:11px;line-height:11px;color:#000;transform:scaleX(0.82);">Age</div>
<div class="t" style="left:281.00px;width:100px;text-align:center;top:199.49px;font-size:11px;line-height:11px;color:#000;transform:scaleX(0.946);">State</div>
<div class="t" style="left:358.00px;width:100px;text-align:center;top:199.49px;font-size:11px;line-height:11px;color:#000;transform:scaleX(0.885);">LLR_LineType</div>
<div class="t" style="left:434.00px;width:100px;text-align:center;top:199.49px;font-size:11px;line-height:11px;color:#000;transform:scaleX(0.899);">LLR_DNCType</div>
<div class="t" style="left:-4.40px;width:30px;text-align:center;top:215.49px;font-size:11px;line-height:11px;color:#636363;">2</div>
<div class="t" style="left:4.00px;width:100px;text-align:center;top:215.49px;font-size:11px;line-height:11px;color:#000;">Meredith</div>
<div class="t" style="left:99.50px;top:215.49px;font-size:11px;line-height:11px;color:#000;letter-spacing:-0.4px;">Der</div>
<div class="t" style="left:138.00px;width:100px;text-align:center;top:215.49px;font-size:11px;line-height:11px;color:#000;">*Example*</div>
<div class="t" style="left:207.00px;width:100px;text-align:center;top:215.49px;font-size:11px;line-height:11px;color:#000;">48</div>
<div class="t" style="left:281.00px;width:100px;text-align:center;top:215.49px;font-size:11px;line-height:11px;color:#000;">Maryland</div>
<div class="t" style="left:358.00px;width:100px;text-align:center;top:215.49px;font-size:11px;line-height:11px;color:#000;">mobile</div>
<div class="t" style="left:434.00px;width:100px;text-align:center;top:215.49px;font-size:11px;line-height:11px;color:#000;">dnc</div>
<div class="t" style="left:-4.40px;width:30px;text-align:center;top:231.49px;font-size:11px;line-height:11px;color:#636363;">3</div>
<div class="t" style="left:4.00px;width:100px;text-align:center;top:231.49px;font-size:11px;line-height:11px;color:#000;">Annette</div>
<div class="t" style="left:69.00px;width:100px;text-align:center;top:231.49px;font-size:11px;line-height:11px;color:#000;">Vacca</div>
<div class="t" style="left:138.00px;width:100px;text-align:center;top:231.49px;font-size:11px;line-height:11px;color:#000;">*Example*</div>
<div class="t" style="left:207.00px;width:100px;text-align:center;top:231.49px;font-size:11px;line-height:11px;color:#000;">58</div>
<div class="t" style="left:281.00px;width:100px;text-align:center;top:231.49px;font-size:11px;line-height:11px;color:#000;">Maryland</div>
<div class="t" style="left:358.00px;width:100px;text-align:center;top:231.49px;font-size:11px;line-height:11px;color:#000;">mobile</div>
<div class="t" style="left:434.00px;width:100px;text-align:center;top:231.49px;font-size:11px;line-height:11px;color:#000;">clean</div>
<div class="t" style="left:-4.40px;width:30px;text-align:center;top:247.49px;font-size:11px;line-height:11px;color:#636363;">4</div>
<div class="t" style="left:4.00px;width:100px;text-align:center;top:247.49px;font-size:11px;line-height:11px;color:#000;">Lauren</div>
<div class="t" style="left:69.00px;width:100px;text-align:center;top:247.49px;font-size:11px;line-height:11px;color:#000;">Markham</div>
<div class="t" style="left:138.00px;width:100px;text-align:center;top:247.49px;font-size:11px;line-height:11px;color:#000;">*Example*</div>
<div class="t" style="left:207.00px;width:100px;text-align:center;top:247.49px;font-size:11px;line-height:11px;color:#000;">38</div>
<div class="t" style="left:281.00px;width:100px;text-align:center;top:247.49px;font-size:11px;line-height:11px;color:#000;">Wisconsin</div>
<div class="t" style="left:358.00px;width:100px;text-align:center;top:247.49px;font-size:11px;line-height:11px;color:#000;">mobile</div>
<div class="t" style="left:434.00px;width:100px;text-align:center;top:247.49px;font-size:11px;line-height:11px;color:#000;">clean</div>
<div class="t" style="left:-4.40px;width:30px;text-align:center;top:263.49px;font-size:11px;line-height:11px;color:#636363;">5</div>
<div class="t" style="left:4.00px;width:100px;text-align:center;top:263.49px;font-size:11px;line-height:11px;color:#000;">Cindy</div>
<div class="t" style="left:69.00px;width:100px;text-align:center;top:263.49px;font-size:11px;line-height:11px;color:#000;">Hinckley</div>
<div class="t" style="left:138.00px;width:100px;text-align:center;top:263.49px;font-size:11px;line-height:11px;color:#000;">*Example*</div>
<div class="t" style="left:207.00px;width:100px;text-align:center;top:263.49px;font-size:11px;line-height:11px;color:#000;">57</div>
<div class="t" style="left:281.00px;width:100px;text-align:center;top:263.49px;font-size:11px;line-height:11px;color:#000;">Iowa</div>
<div class="t" style="left:358.00px;width:100px;text-align:center;top:263.49px;font-size:11px;line-height:11px;color:#000;">mobile</div>
<div class="t" style="left:434.00px;width:100px;text-align:center;top:263.49px;font-size:11px;line-height:11px;color:#000;">dnc</div>
<div class="t" style="left:-4.40px;width:30px;text-align:center;top:279.49px;font-size:11px;line-height:11px;color:#636363;">6</div>
<div class="t" style="left:4.00px;width:100px;text-align:center;top:279.49px;font-size:11px;line-height:11px;color:#000;">Michael</div>
<div class="t" style="left:69.00px;width:100px;text-align:center;top:279.49px;font-size:11px;line-height:11px;color:#000;">Warren</div>
<div class="t" style="left:138.00px;width:100px;text-align:center;top:279.49px;font-size:11px;line-height:11px;color:#000;">*Example*</div>
<div class="t" style="left:207.00px;width:100px;text-align:center;top:279.49px;font-size:11px;line-height:11px;color:#000;">56</div>
<div class="t" style="left:281.00px;width:100px;text-align:center;top:279.49px;font-size:11px;line-height:11px;color:#000;">Illinois</div>
<div class="t" style="left:358.00px;width:100px;text-align:center;top:279.49px;font-size:11px;line-height:11px;color:#000;">mobile</div>
<div class="t" style="left:434.00px;width:100px;text-align:center;top:279.49px;font-size:11px;line-height:11px;color:#000;">clean</div>
<div class="t" style="left:-4.40px;width:30px;text-align:center;top:295.49px;font-size:11px;line-height:11px;color:#636363;">7</div>
<div class="t" style="left:4.00px;width:100px;text-align:center;top:295.49px;font-size:11px;line-height:11px;color:#000;">Bruce</div>
<div class="t" style="left:69.00px;width:100px;text-align:center;top:295.49px;font-size:11px;line-height:11px;color:#000;">Spicknall</div>
<div class="t" style="left:138.00px;width:100px;text-align:center;top:295.49px;font-size:11px;line-height:11px;color:#000;">*Example*</div>
<div class="t" style="left:207.00px;width:100px;text-align:center;top:295.49px;font-size:11px;line-height:11px;color:#000;">60</div>
<div class="t" style="left:281.00px;width:100px;text-align:center;top:295.49px;font-size:11px;line-height:11px;color:#000;">Tennessee</div>
<div class="t" style="left:358.00px;width:100px;text-align:center;top:295.49px;font-size:11px;line-height:11px;color:#000;">mobile</div>
<div class="t" style="left:434.00px;width:100px;text-align:center;top:295.49px;font-size:11px;line-height:11px;color:#000;">dnc</div>
<div class="t" style="left:-4.40px;width:30px;text-align:center;top:311.49px;font-size:11px;line-height:11px;color:#636363;">8</div>
<div class="t" style="left:4.00px;width:100px;text-align:center;top:311.49px;font-size:11px;line-height:11px;color:#000;">Francisco</div>
<div class="t" style="left:69.00px;width:100px;text-align:center;top:311.49px;font-size:11px;line-height:11px;color:#000;">Felix</div>
<div class="t" style="left:138.00px;width:100px;text-align:center;top:311.49px;font-size:11px;line-height:11px;color:#000;">*Example*</div>
<div class="t" style="left:207.00px;width:100px;text-align:center;top:311.49px;font-size:11px;line-height:11px;color:#000;">38</div>
<div class="t" style="left:281.00px;width:100px;text-align:center;top:311.49px;font-size:11px;line-height:11px;color:#000;">Tennessee</div>
<div class="t" style="left:358.00px;width:100px;text-align:center;top:311.49px;font-size:11px;line-height:11px;color:#000;">mobile</div>
<div class="t" style="left:434.00px;width:100px;text-align:center;top:311.49px;font-size:11px;line-height:11px;color:#000;">clean</div>
<div class="t" style="left:-4.40px;width:30px;text-align:center;top:327.49px;font-size:11px;line-height:11px;color:#636363;">9</div>
<div class="t" style="left:4.00px;width:100px;text-align:center;top:327.49px;font-size:11px;line-height:11px;color:#000;">Beth</div>
<div class="t" style="left:69.00px;width:100px;text-align:center;top:327.49px;font-size:11px;line-height:11px;color:#000;">Milks</div>
<div class="t" style="left:138.00px;width:100px;text-align:center;top:327.49px;font-size:11px;line-height:11px;color:#000;">*Example*</div>
<div class="t" style="left:207.00px;width:100px;text-align:center;top:327.49px;font-size:11px;line-height:11px;color:#000;">58</div>
<div class="t" style="left:281.00px;width:100px;text-align:center;top:327.49px;font-size:11px;line-height:11px;color:#000;">North Carolina</div>
<div class="t" style="left:358.00px;width:100px;text-align:center;top:327.49px;font-size:11px;line-height:11px;color:#000;">mobile</div>
<div class="t" style="left:434.00px;width:100px;text-align:center;top:327.49px;font-size:11px;line-height:11px;color:#000;">clean</div>
<div class="t" style="left:-4.40px;width:30px;text-align:center;top:343.49px;font-size:11px;line-height:11px;color:#636363;">10</div>
<div class="t" style="left:4.00px;width:100px;text-align:center;top:343.49px;font-size:11px;line-height:11px;color:#000;">Nicole</div>
<div class="t" style="left:69.00px;width:100px;text-align:center;top:343.49px;font-size:11px;line-height:11px;color:#000;">Newlon</div>
<div class="t" style="left:138.00px;width:100px;text-align:center;top:343.49px;font-size:11px;line-height:11px;color:#000;">*Example*</div>
<div class="t" style="left:207.00px;width:100px;text-align:center;top:343.49px;font-size:11px;line-height:11px;color:#000;">52</div>
<div class="t" style="left:281.00px;width:100px;text-align:center;top:343.49px;font-size:11px;line-height:11px;color:#000;">Florida</div>
<div class="t" style="left:358.00px;width:100px;text-align:center;top:343.49px;font-size:11px;line-height:11px;color:#000;">mobile</div>
<div class="t" style="left:434.00px;width:100px;text-align:center;top:343.49px;font-size:11px;line-height:11px;color:#000;">dnc</div>
<div class="t" style="left:-4.40px;width:30px;text-align:center;top:359.49px;font-size:11px;line-height:11px;color:#636363;">11</div>
<div class="t" style="left:4.00px;width:100px;text-align:center;top:359.49px;font-size:11px;line-height:11px;color:#000;">Chad</div>
<div class="t" style="left:69.00px;width:100px;text-align:center;top:359.49px;font-size:11px;line-height:11px;color:#000;">Phillips</div>
<div class="t" style="left:138.00px;width:100px;text-align:center;top:359.49px;font-size:11px;line-height:11px;color:#000;">*Example*</div>
<div class="t" style="left:207.00px;width:100px;text-align:center;top:359.49px;font-size:11px;line-height:11px;color:#000;">59</div>
<div class="t" style="left:281.00px;width:100px;text-align:center;top:359.49px;font-size:11px;line-height:11px;color:#000;">Texas</div>
<div class="t" style="left:358.00px;width:100px;text-align:center;top:359.49px;font-size:11px;line-height:11px;color:#000;">mobile</div>
<div class="t" style="left:434.00px;width:100px;text-align:center;top:359.49px;font-size:11px;line-height:11px;color:#000;">clean</div>
<div class="t" style="left:-4.40px;width:30px;text-align:center;top:375.49px;font-size:11px;line-height:11px;color:#636363;">12</div>
<div class="t" style="left:4.00px;width:100px;text-align:center;top:375.49px;font-size:11px;line-height:11px;color:#000;">Phyllis</div>
<div class="t" style="left:69.00px;width:100px;text-align:center;top:375.49px;font-size:11px;line-height:11px;color:#000;">Dennis</div>
<div class="t" style="left:138.00px;width:100px;text-align:center;top:375.49px;font-size:11px;line-height:11px;color:#000;">*Example*</div>
<div class="t" style="left:207.00px;width:100px;text-align:center;top:375.49px;font-size:11px;line-height:11px;color:#000;">63</div>
<div class="t" style="left:281.00px;width:100px;text-align:center;top:375.49px;font-size:11px;line-height:11px;color:#000;">Indiana</div>
<div class="t" style="left:358.00px;width:100px;text-align:center;top:375.49px;font-size:11px;line-height:11px;color:#000;">mobile</div>
<div class="t" style="left:434.00px;width:100px;text-align:center;top:375.49px;font-size:11px;line-height:11px;color:#000;">dnc</div>
<div class="t" style="left:-4.40px;width:30px;text-align:center;top:391.49px;font-size:11px;line-height:11px;color:#636363;">13</div>
<div class="t" style="left:4.00px;width:100px;text-align:center;top:391.49px;font-size:11px;line-height:11px;color:#000;">William</div>
<div class="t" style="left:69.00px;width:100px;text-align:center;top:391.49px;font-size:11px;line-height:11px;color:#000;">Angle</div>
<div class="t" style="left:138.00px;width:100px;text-align:center;top:391.49px;font-size:11px;line-height:11px;color:#000;">*Example*</div>
<div class="t" style="left:207.00px;width:100px;text-align:center;top:391.49px;font-size:11px;line-height:11px;color:#000;">53</div>
<div class="t" style="left:281.00px;width:100px;text-align:center;top:391.49px;font-size:11px;line-height:11px;color:#000;">Wisconsin</div>
<div class="t" style="left:358.00px;width:100px;text-align:center;top:391.49px;font-size:11px;line-height:11px;color:#000;">mobile</div>
<div class="t" style="left:434.00px;width:100px;text-align:center;top:391.49px;font-size:11px;line-height:11px;color:#000;">clean</div>
<div class="t" style="left:-4.40px;width:30px;text-align:center;top:407.49px;font-size:11px;line-height:11px;color:#636363;">14</div>
<div class="t" style="left:4.00px;width:100px;text-align:center;top:407.49px;font-size:11px;line-height:11px;color:#000;">David</div>
<div class="t" style="left:69.00px;width:100px;text-align:center;top:407.49px;font-size:11px;line-height:11px;color:#000;">Jimenez</div>
<div class="t" style="left:138.00px;width:100px;text-align:center;top:407.49px;font-size:11px;line-height:11px;color:#000;">*Example*</div>
<div class="t" style="left:207.00px;width:100px;text-align:center;top:407.49px;font-size:11px;line-height:11px;color:#000;">54</div>
<div class="t" style="left:281.00px;width:100px;text-align:center;top:407.49px;font-size:11px;line-height:11px;color:#000;">Nevada</div>
<div class="t" style="left:358.00px;width:100px;text-align:center;top:407.49px;font-size:11px;line-height:11px;color:#000;">mobile</div>
<div class="t" style="left:434.00px;width:100px;text-align:center;top:407.49px;font-size:11px;line-height:11px;color:#000;">clean</div>
<div class="t" style="left:-4.40px;width:30px;text-align:center;top:423.49px;font-size:11px;line-height:11px;color:#636363;">15</div>
<div class="t" style="left:4.00px;width:100px;text-align:center;top:423.49px;font-size:11px;line-height:11px;color:#000;">Jason</div>
<div class="t" style="left:69.00px;width:100px;text-align:center;top:423.49px;font-size:11px;line-height:11px;color:#000;">Setz</div>
<div class="t" style="left:138.00px;width:100px;text-align:center;top:423.49px;font-size:11px;line-height:11px;color:#000;">*Example*</div>
<div class="t" style="left:207.00px;width:100px;text-align:center;top:423.49px;font-size:11px;line-height:11px;color:#000;">52</div>
<div class="t" style="left:281.00px;width:100px;text-align:center;top:423.49px;font-size:11px;line-height:11px;color:#000;">Georgia</div>
<div class="t" style="left:358.00px;width:100px;text-align:center;top:423.49px;font-size:11px;line-height:11px;color:#000;">mobile</div>
<div class="t" style="left:434.00px;width:100px;text-align:center;top:423.49px;font-size:11px;line-height:11px;color:#000;">clean</div>
<div class="t" style="left:-4.40px;width:30px;text-align:center;top:439.49px;font-size:11px;line-height:11px;color:#636363;">16</div>
<div class="t" style="left:4.00px;width:100px;text-align:center;top:439.49px;font-size:11px;line-height:11px;color:#000;">Steven</div>
<div class="t" style="left:69.00px;width:100px;text-align:center;top:439.49px;font-size:11px;line-height:11px;color:#000;">Kieft</div>
<div class="t" style="left:138.00px;width:100px;text-align:center;top:439.49px;font-size:11px;line-height:11px;color:#000;">*Example*</div>
<div class="t" style="left:207.00px;width:100px;text-align:center;top:439.49px;font-size:11px;line-height:11px;color:#000;">63</div>
<div class="t" style="left:281.00px;width:100px;text-align:center;top:439.49px;font-size:11px;line-height:11px;color:#000;">Kansas</div>
<div class="t" style="left:358.00px;width:100px;text-align:center;top:439.49px;font-size:11px;line-height:11px;color:#000;">mobile</div>
<div class="t" style="left:434.00px;width:100px;text-align:center;top:439.49px;font-size:11px;line-height:11px;color:#000;">clean</div>
<div class="t" style="left:-4.40px;width:30px;text-align:center;top:455.49px;font-size:11px;line-height:11px;color:#636363;">17</div>
<div class="t" style="left:4.00px;width:100px;text-align:center;top:455.49px;font-size:11px;line-height:11px;color:#000;">Masic</div>
<div class="t" style="left:69.00px;width:100px;text-align:center;top:455.49px;font-size:11px;line-height:11px;color:#000;">Hannah</div>
<div class="t" style="left:138.00px;width:100px;text-align:center;top:455.49px;font-size:11px;line-height:11px;color:#000;">*Example*</div>
<div class="t" style="left:207.00px;width:100px;text-align:center;top:455.49px;font-size:11px;line-height:11px;color:#000;">48</div>
<div class="t" style="left:281.00px;width:100px;text-align:center;top:455.49px;font-size:11px;line-height:11px;color:#000;">Tennessee</div>
<div class="t" style="left:358.00px;width:100px;text-align:center;top:455.49px;font-size:11px;line-height:11px;color:#000;">mobile</div>
<div class="t" style="left:434.00px;width:100px;text-align:center;top:455.49px;font-size:11px;line-height:11px;color:#000;">dnc</div>
<div class="t" style="left:-4.40px;width:30px;text-align:center;top:471.49px;font-size:11px;line-height:11px;color:#636363;">18</div>
<div class="t" style="left:4.00px;width:100px;text-align:center;top:471.49px;font-size:11px;line-height:11px;color:#000;">Christopher</div>
<div class="t" style="left:69.00px;width:100px;text-align:center;top:471.49px;font-size:11px;line-height:11px;color:#000;">Field</div>
<div class="t" style="left:138.00px;width:100px;text-align:center;top:471.49px;font-size:11px;line-height:11px;color:#000;">*Example*</div>
<div class="t" style="left:207.00px;width:100px;text-align:center;top:471.49px;font-size:11px;line-height:11px;color:#000;">43</div>
<div class="t" style="left:281.00px;width:100px;text-align:center;top:471.49px;font-size:11px;line-height:11px;color:#000;">Ohio</div>
<div class="t" style="left:358.00px;width:100px;text-align:center;top:471.49px;font-size:11px;line-height:11px;color:#000;">mobile</div>
<div class="t" style="left:434.00px;width:100px;text-align:center;top:471.49px;font-size:11px;line-height:11px;color:#000;">clean</div>
<div class="t" style="left:-4.40px;width:30px;text-align:center;top:487.49px;font-size:11px;line-height:11px;color:#636363;">19</div>
<div class="t" style="left:4.00px;width:100px;text-align:center;top:487.49px;font-size:11px;line-height:11px;color:#000;">Kirk</div>
<div class="t" style="left:69.00px;width:100px;text-align:center;top:487.49px;font-size:11px;line-height:11px;color:#000;">Darroch</div>
<div class="t" style="left:138.00px;width:100px;text-align:center;top:487.49px;font-size:11px;line-height:11px;color:#000;">*Example*</div>
<div class="t" style="left:207.00px;width:100px;text-align:center;top:487.49px;font-size:11px;line-height:11px;color:#000;">56</div>
<div class="t" style="left:281.00px;width:100px;text-align:center;top:487.49px;font-size:11px;line-height:11px;color:#000;">Texas</div>
<div class="t" style="left:358.00px;width:100px;text-align:center;top:487.49px;font-size:11px;line-height:11px;color:#000;">mobile</div>
<div class="t" style="left:434.00px;width:100px;text-align:center;top:487.49px;font-size:11px;line-height:11px;color:#000;">dnc</div>
<div class="t" style="left:-4.40px;width:30px;text-align:center;top:503.49px;font-size:11px;line-height:11px;color:#636363;">20</div>
<div class="t" style="left:4.00px;width:100px;text-align:center;top:503.49px;font-size:11px;line-height:11px;color:#000;">Angela</div>
<div class="t" style="left:69.00px;width:100px;text-align:center;top:503.49px;font-size:11px;line-height:11px;color:#000;">Keareny</div>
<div class="t" style="left:138.00px;width:100px;text-align:center;top:503.49px;font-size:11px;line-height:11px;color:#000;">*Example*</div>
<div class="t" style="left:207.00px;width:100px;text-align:center;top:503.49px;font-size:11px;line-height:11px;color:#000;">63</div>
<div class="t" style="left:281.00px;width:100px;text-align:center;top:503.49px;font-size:11px;line-height:11px;color:#000;">Tennessee</div>
<div class="t" style="left:358.00px;width:100px;text-align:center;top:503.49px;font-size:11px;line-height:11px;color:#000;">mobile</div>
<div class="t" style="left:434.00px;width:100px;text-align:center;top:503.49px;font-size:11px;line-height:11px;color:#000;">clean</div>
<div class="t" style="left:-4.40px;width:30px;text-align:center;top:519.49px;font-size:11px;line-height:11px;color:#636363;">21</div>
<div class="t" style="left:4.00px;width:100px;text-align:center;top:519.49px;font-size:11px;line-height:11px;color:#000;">Chester</div>
<div class="t" style="left:69.00px;width:100px;text-align:center;top:519.49px;font-size:11px;line-height:11px;color:#000;">Starr</div>
<div class="t" style="left:138.00px;width:100px;text-align:center;top:519.49px;font-size:11px;line-height:11px;color:#000;">*Example*</div>
<div class="t" style="left:207.00px;width:100px;text-align:center;top:519.49px;font-size:11px;line-height:11px;color:#000;">58</div>
<div class="t" style="left:281.00px;width:100px;text-align:center;top:519.49px;font-size:11px;line-height:11px;color:#000;">Georgia</div>
<div class="t" style="left:358.00px;width:100px;text-align:center;top:519.49px;font-size:11px;line-height:11px;color:#000;">mobile</div>
<div class="t" style="left:434.00px;width:100px;text-align:center;top:519.49px;font-size:11px;line-height:11px;color:#000;">dnc</div>
<div class="t" style="left:-4.40px;width:30px;text-align:center;top:535.49px;font-size:11px;line-height:11px;color:#636363;">22</div>
<div class="t" style="left:4.00px;width:100px;text-align:center;top:535.49px;font-size:11px;line-height:11px;color:#000;">William</div>
<div class="t" style="left:69.00px;width:100px;text-align:center;top:535.49px;font-size:11px;line-height:11px;color:#000;">Cullen</div>
<div class="t" style="left:138.00px;width:100px;text-align:center;top:535.49px;font-size:11px;line-height:11px;color:#000;">*Example*</div>
<div class="t" style="left:207.00px;width:100px;text-align:center;top:535.49px;font-size:11px;line-height:11px;color:#000;">54</div>
<div class="t" style="left:281.00px;width:100px;text-align:center;top:535.49px;font-size:11px;line-height:11px;color:#000;">North Carolina</div>
<div class="t" style="left:358.00px;width:100px;text-align:center;top:535.49px;font-size:11px;line-height:11px;color:#000;">mobile</div>
<div class="t" style="left:434.00px;width:100px;text-align:center;top:535.49px;font-size:11px;line-height:11px;color:#000;">dnc</div>
<div class="t" style="left:-4.40px;width:30px;text-align:center;top:551.49px;font-size:11px;line-height:11px;color:#636363;">23</div>
<div class="t" style="left:4.00px;width:100px;text-align:center;top:551.49px;font-size:11px;line-height:11px;color:#000;">Jeremy</div>
<div class="t" style="left:69.00px;width:100px;text-align:center;top:551.49px;font-size:11px;line-height:11px;color:#000;">Zeltzer</div>
<div class="t" style="left:138.00px;width:100px;text-align:center;top:551.49px;font-size:11px;line-height:11px;color:#000;">*Example*</div>
<div class="t" style="left:207.00px;width:100px;text-align:center;top:551.49px;font-size:11px;line-height:11px;color:#000;">63</div>
<div class="t" style="left:281.00px;width:100px;text-align:center;top:551.49px;font-size:11px;line-height:11px;color:#000;">Michigan</div>
<div class="t" style="left:358.00px;width:100px;text-align:center;top:551.49px;font-size:11px;line-height:11px;color:#000;">mobile</div>
<div class="t" style="left:434.00px;width:100px;text-align:center;top:551.49px;font-size:11px;line-height:11px;color:#000;">clean</div>
<div class="t" style="left:-4.40px;width:30px;text-align:center;top:567.49px;font-size:11px;line-height:11px;color:#636363;">24</div>
<div class="t" style="left:4.00px;width:100px;text-align:center;top:567.49px;font-size:11px;line-height:11px;color:#000;">Duane</div>
<div class="t" style="left:69.00px;width:100px;text-align:center;top:567.49px;font-size:11px;line-height:11px;color:#000;">Ayres</div>
<div class="t" style="left:138.00px;width:100px;text-align:center;top:567.49px;font-size:11px;line-height:11px;color:#000;">*Example*</div>
<div class="t" style="left:207.00px;width:100px;text-align:center;top:567.49px;font-size:11px;line-height:11px;color:#000;">62</div>
<div class="t" style="left:281.00px;width:100px;text-align:center;top:567.49px;font-size:11px;line-height:11px;color:#000;">Indiana</div>
<div class="t" style="left:358.00px;width:100px;text-align:center;top:567.49px;font-size:11px;line-height:11px;color:#000;">mobile</div>
<div class="t" style="left:434.00px;width:100px;text-align:center;top:567.49px;font-size:11px;line-height:11px;color:#000;">dnc</div>
<div class="t" style="left:-4.40px;width:30px;text-align:center;top:583.49px;font-size:11px;line-height:11px;color:#636363;">25</div>
<div class="t" style="left:4.00px;width:100px;text-align:center;top:583.49px;font-size:11px;line-height:11px;color:#000;">Kevin</div>
<div class="t" style="left:69.00px;width:100px;text-align:center;top:583.49px;font-size:11px;line-height:11px;color:#000;">Bueker</div>
<div class="t" style="left:138.00px;width:100px;text-align:center;top:583.49px;font-size:11px;line-height:11px;color:#000;">*Example*</div>
<div class="t" style="left:207.00px;width:100px;text-align:center;top:583.49px;font-size:11px;line-height:11px;color:#000;">39</div>
<div class="t" style="left:281.00px;width:100px;text-align:center;top:583.49px;font-size:11px;line-height:11px;color:#000;">Texas</div>
<div class="t" style="left:358.00px;width:100px;text-align:center;top:583.49px;font-size:11px;line-height:11px;color:#000;">mobile</div>
<div class="t" style="left:434.00px;width:100px;text-align:center;top:583.49px;font-size:11px;line-height:11px;color:#000;">dnc</div>
<div class="t" style="left:-4.40px;width:30px;text-align:center;top:599.49px;font-size:11px;line-height:11px;color:#636363;">26</div>
<div class="t" style="left:4.00px;width:100px;text-align:center;top:599.49px;font-size:11px;line-height:11px;color:#000;">Thu</div>
<div class="t" style="left:69.00px;width:100px;text-align:center;top:599.49px;font-size:11px;line-height:11px;color:#000;">Pham</div>
<div class="t" style="left:138.00px;width:100px;text-align:center;top:599.49px;font-size:11px;line-height:11px;color:#000;">*Example*</div>
<div class="t" style="left:207.00px;width:100px;text-align:center;top:599.49px;font-size:11px;line-height:11px;color:#000;">43</div>
<div class="t" style="left:281.00px;width:100px;text-align:center;top:599.49px;font-size:11px;line-height:11px;color:#000;">Texas</div>
<div class="t" style="left:358.00px;width:100px;text-align:center;top:599.49px;font-size:11px;line-height:11px;color:#000;">mobile</div>
<div class="t" style="left:434.00px;width:100px;text-align:center;top:599.49px;font-size:11px;line-height:11px;color:#000;">clean</div>
<div class="t" style="left:-4.40px;width:30px;text-align:center;top:615.49px;font-size:11px;line-height:11px;color:#636363;">27</div>
<div class="t" style="left:4.00px;width:100px;text-align:center;top:615.49px;font-size:11px;line-height:11px;color:#000;">Jeffrey</div>
<div class="t" style="left:69.00px;width:100px;text-align:center;top:615.49px;font-size:11px;line-height:11px;color:#000;">Bryan</div>
<div class="t" style="left:138.00px;width:100px;text-align:center;top:615.49px;font-size:11px;line-height:11px;color:#000;">*Example*</div>
<div class="t" style="left:207.00px;width:100px;text-align:center;top:615.49px;font-size:11px;line-height:11px;color:#000;">55</div>
<div class="t" style="left:281.00px;width:100px;text-align:center;top:615.49px;font-size:11px;line-height:11px;color:#000;">Ohio</div>
<div class="t" style="left:358.00px;width:100px;text-align:center;top:615.49px;font-size:11px;line-height:11px;color:#000;">mobile</div>
<div class="t" style="left:434.00px;width:100px;text-align:center;top:615.49px;font-size:11px;line-height:11px;color:#000;">dnc</div>
<div class="t" style="left:-4.40px;width:30px;text-align:center;top:631.49px;font-size:11px;line-height:11px;color:#636363;">28</div>
<div class="t" style="left:4.00px;width:100px;text-align:center;top:631.49px;font-size:11px;line-height:11px;color:#000;">Greg</div>
<div class="t" style="left:69.00px;width:100px;text-align:center;top:631.49px;font-size:11px;line-height:11px;color:#000;">Eichacker</div>
<div class="t" style="left:138.00px;width:100px;text-align:center;top:631.49px;font-size:11px;line-height:11px;color:#000;">*Example*</div>
<div class="t" style="left:207.00px;width:100px;text-align:center;top:631.49px;font-size:11px;line-height:11px;color:#000;">57</div>
<div class="t" style="left:281.00px;width:100px;text-align:center;top:631.49px;font-size:11px;line-height:11px;color:#000;">South Dakota</div>
<div class="t" style="left:358.00px;width:100px;text-align:center;top:631.49px;font-size:11px;line-height:11px;color:#000;">mobile</div>
<div class="t" style="left:434.00px;width:100px;text-align:center;top:631.49px;font-size:11px;line-height:11px;color:#000;">dnc</div>
<div class="t" style="left:-4.40px;width:30px;text-align:center;top:647.49px;font-size:11px;line-height:11px;color:#636363;">29</div>
<div class="t" style="left:4.00px;width:100px;text-align:center;top:647.49px;font-size:11px;line-height:11px;color:#000;">Janet</div>
<div class="t" style="left:69.00px;width:100px;text-align:center;top:647.49px;font-size:11px;line-height:11px;color:#000;">Daum</div>
<div class="t" style="left:138.00px;width:100px;text-align:center;top:647.49px;font-size:11px;line-height:11px;color:#000;">*Example*</div>
<div class="t" style="left:207.00px;width:100px;text-align:center;top:647.49px;font-size:11px;line-height:11px;color:#000;">53</div>
<div class="t" style="left:281.00px;width:100px;text-align:center;top:647.49px;font-size:11px;line-height:11px;color:#000;">Texas</div>
<div class="t" style="left:358.00px;width:100px;text-align:center;top:647.49px;font-size:11px;line-height:11px;color:#000;">mobile</div>
<div class="t" style="left:434.00px;width:100px;text-align:center;top:647.49px;font-size:11px;line-height:11px;color:#000;">clean</div>
<div class="t" style="left:-4.40px;width:30px;text-align:center;top:663.49px;font-size:11px;line-height:11px;color:#636363;">30</div>
<div class="t" style="left:4.00px;width:100px;text-align:center;top:663.49px;font-size:11px;line-height:11px;color:#000;">Ujunma</div>
<div class="t" style="left:69.00px;width:100px;text-align:center;top:663.49px;font-size:11px;line-height:11px;color:#000;">Egwim</div>
<div class="t" style="left:138.00px;width:100px;text-align:center;top:663.49px;font-size:11px;line-height:11px;color:#000;">*Example*</div>
<div class="t" style="left:207.00px;width:100px;text-align:center;top:663.49px;font-size:11px;line-height:11px;color:#000;">60</div>
<div class="t" style="left:281.00px;width:100px;text-align:center;top:663.49px;font-size:11px;line-height:11px;color:#000;">Texas</div>
<div class="t" style="left:358.00px;width:100px;text-align:center;top:663.49px;font-size:11px;line-height:11px;color:#000;">mobile</div>
<div class="t" style="left:434.00px;width:100px;text-align:center;top:663.49px;font-size:11px;line-height:11px;color:#000;">clean</div>
<div class="t" style="left:-4.40px;width:30px;text-align:center;top:679.49px;font-size:11px;line-height:11px;color:#636363;">31</div>
<div class="t" style="left:4.00px;width:100px;text-align:center;top:679.49px;font-size:11px;line-height:11px;color:#000;">Nicole</div>
<div class="t" style="left:69.00px;width:100px;text-align:center;top:679.49px;font-size:11px;line-height:11px;color:#000;">Tichota</div>
<div class="t" style="left:138.00px;width:100px;text-align:center;top:679.49px;font-size:11px;line-height:11px;color:#000;">*Example*</div>
<div class="t" style="left:207.00px;width:100px;text-align:center;top:679.49px;font-size:11px;line-height:11px;color:#000;">50</div>
<div class="t" style="left:281.00px;width:100px;text-align:center;top:679.49px;font-size:11px;line-height:11px;color:#000;">Colorado</div>
<div class="t" style="left:358.00px;width:100px;text-align:center;top:679.49px;font-size:11px;line-height:11px;color:#000;">mobile</div>
<div class="t" style="left:434.00px;width:100px;text-align:center;top:679.49px;font-size:11px;line-height:11px;color:#000;">dnc</div>
<div class="r" style="left:115px;top:212px;width:24px;height:21px;background:#f9f9f9;border-radius:4px;box-shadow:0 0 0 1px #e2e2e2, 0 1px 2px rgba(0,0,0,0.08);"></div>
<div class="r" style="left:118px;top:215px;width:18px;height:2.5px;background:#9fc4ee;"></div>
<div class="r" style="left:118px;top:215px;width:5px;height:13px;background:#9fc4ee;"></div>
<div class="r" style="left:126px;top:223.2px;width:9px;height:2.4px;background:#ea7b22;"></div>
<div class="r" style="left:129.3px;top:219.8px;width:2.4px;height:9px;background:#ea7b22;"></div>
<div class="r" style="left:118px;top:229px;width:1px;height:1px;background:#b0b0b0;"></div>
<div class="r" style="left:118px;top:231px;width:1px;height:1px;background:#b0b0b0;"></div>
<div class="r" style="left:120px;top:229px;width:1px;height:1px;background:#b0b0b0;"></div>
<div class="r" style="left:120px;top:231px;width:1px;height:1px;background:#b0b0b0;"></div>
<div class="r" style="left:122px;top:229px;width:1px;height:1px;background:#b0b0b0;"></div>
<div class="r" style="left:122px;top:231px;width:1px;height:1px;background:#b0b0b0;"></div>
<div class="r" style="left:0px;top:685px;width:993px;height:25px;background:#eeeeee;"></div>
<svg class="r" style="left:13px;top:693px" width="10" height="12" viewBox="0 0 10 12"><path d="M8 0.7 L8 11.3 L1 6z" fill="#b2b2b2"/></svg>
<svg class="r" style="left:36px;top:693px" width="10" height="12" viewBox="0 0 10 12"><path d="M1.5 0.7 L1.5 11.3 L8.5 6z" fill="#b2b2b2"/></svg>
<div class="r" style="left:0px;top:685px;width:993px;height:1px;background:#d3d3d3;"></div>
<div class="r" style="left:60px;top:685px;width:140px;height:22px;background:#fff;box-shadow:0 1px 1.5px rgba(0,0,0,0.25), 0.5px 0 0 #cfcfcf, -0.5px 0 0 #dcdcdc;border-radius:0 0 3px 3px;"></div>
<div class="t" style="left:60.00px;width:140px;text-align:center;top:692.04px;font-size:12px;line-height:12px;color:#1f7a45;font-weight:bold;">High Income Data</div>
<svg class="r" style="left:213px;top:692px" width="13" height="13" viewBox="0 0 13 13"><path d="M7 1 v10 M2 6 h10" stroke="#4a4a4a" stroke-width="2"/></svg>
<div class="r" style="left:238px;top:685px;width:1px;height:22px;background:#d6d6d6;"></div>
<div class="r" style="left:0px;top:710px;width:993px;height:1px;background:#f3f3f3;"></div>
<div class="r" style="left:0px;top:711px;width:993px;height:1px;background:#a6a6a6;"></div>
<div class="r" style="left:0px;top:712px;width:993px;height:7px;background:#e2e2e2;"></div>
<div class="r" style="left:674px;top:712px;width:37px;height:7px;background:#a9a9a9;"></div>
<div class="t" style="left:24.00px;top:717.34px;font-size:12px;line-height:12px;color:#444;">Ready</div>
<div class="t" style="left:100.00px;top:717.34px;font-size:12px;line-height:12px;color:#444;">Accessibility: Unavailable</div>
<svg class="r" style="left:77px;top:713px" width="15" height="8" viewBox="0 0 15 8"><circle cx="7.5" cy="3.5" r="1.8" fill="none" stroke="#555" stroke-width="1.1"/><path d="M1.5 7.5 q1.5 -2.5 3.5 -2 h5 q2 -0.5 3.5 2" fill="none" stroke="#555" stroke-width="1.1"/></svg>
<svg class="r" style="left:686px;top:715px" width="13" height="6" viewBox="0 0 13 6"><rect x="0.5" y="0.5" width="12" height="8" fill="none" stroke="#fff" stroke-width="1"/><path d="M4.5 0 v6 M8.5 0 v6" stroke="#fff"/></svg>
<svg class="r" style="left:721px;top:715px" width="14" height="6" viewBox="0 0 14 6"><rect x="0.5" y="0.5" width="13" height="8" fill="none" stroke="#555" stroke-width="1.2"/><rect x="3" y="3" width="8" height="4" fill="#555"/></svg>
<svg class="r" style="left:757px;top:715px" width="14" height="6" viewBox="0 0 14 6"><rect x="0.5" y="0.5" width="13" height="8" fill="none" stroke="#555" stroke-width="1.2"/><path d="M5 0 v6 M9 0 v6" stroke="#555"/></svg>
<div class="r" style="left:848px;top:713px;width:14px;height:14px;background:#fff;border-radius:50%;box-shadow:0 0 1px rgba(0,0,0,0.4);"></div>
<div class="r" style="left:915px;top:716px;width:1.5px;height:3px;background:#444;"></div>
<div class="t" style="left:938.00px;top:717.34px;font-size:12px;line-height:12px;color:#444;">100%</div>
<div class="r" style="left:992px;top:0px;width:1px;height:719px;background:#f2f2f2;"></div>
<div class="r" style="left:993px;top:0px;width:2px;height:719px;background:#1c1820;"></div>
</body></html>
